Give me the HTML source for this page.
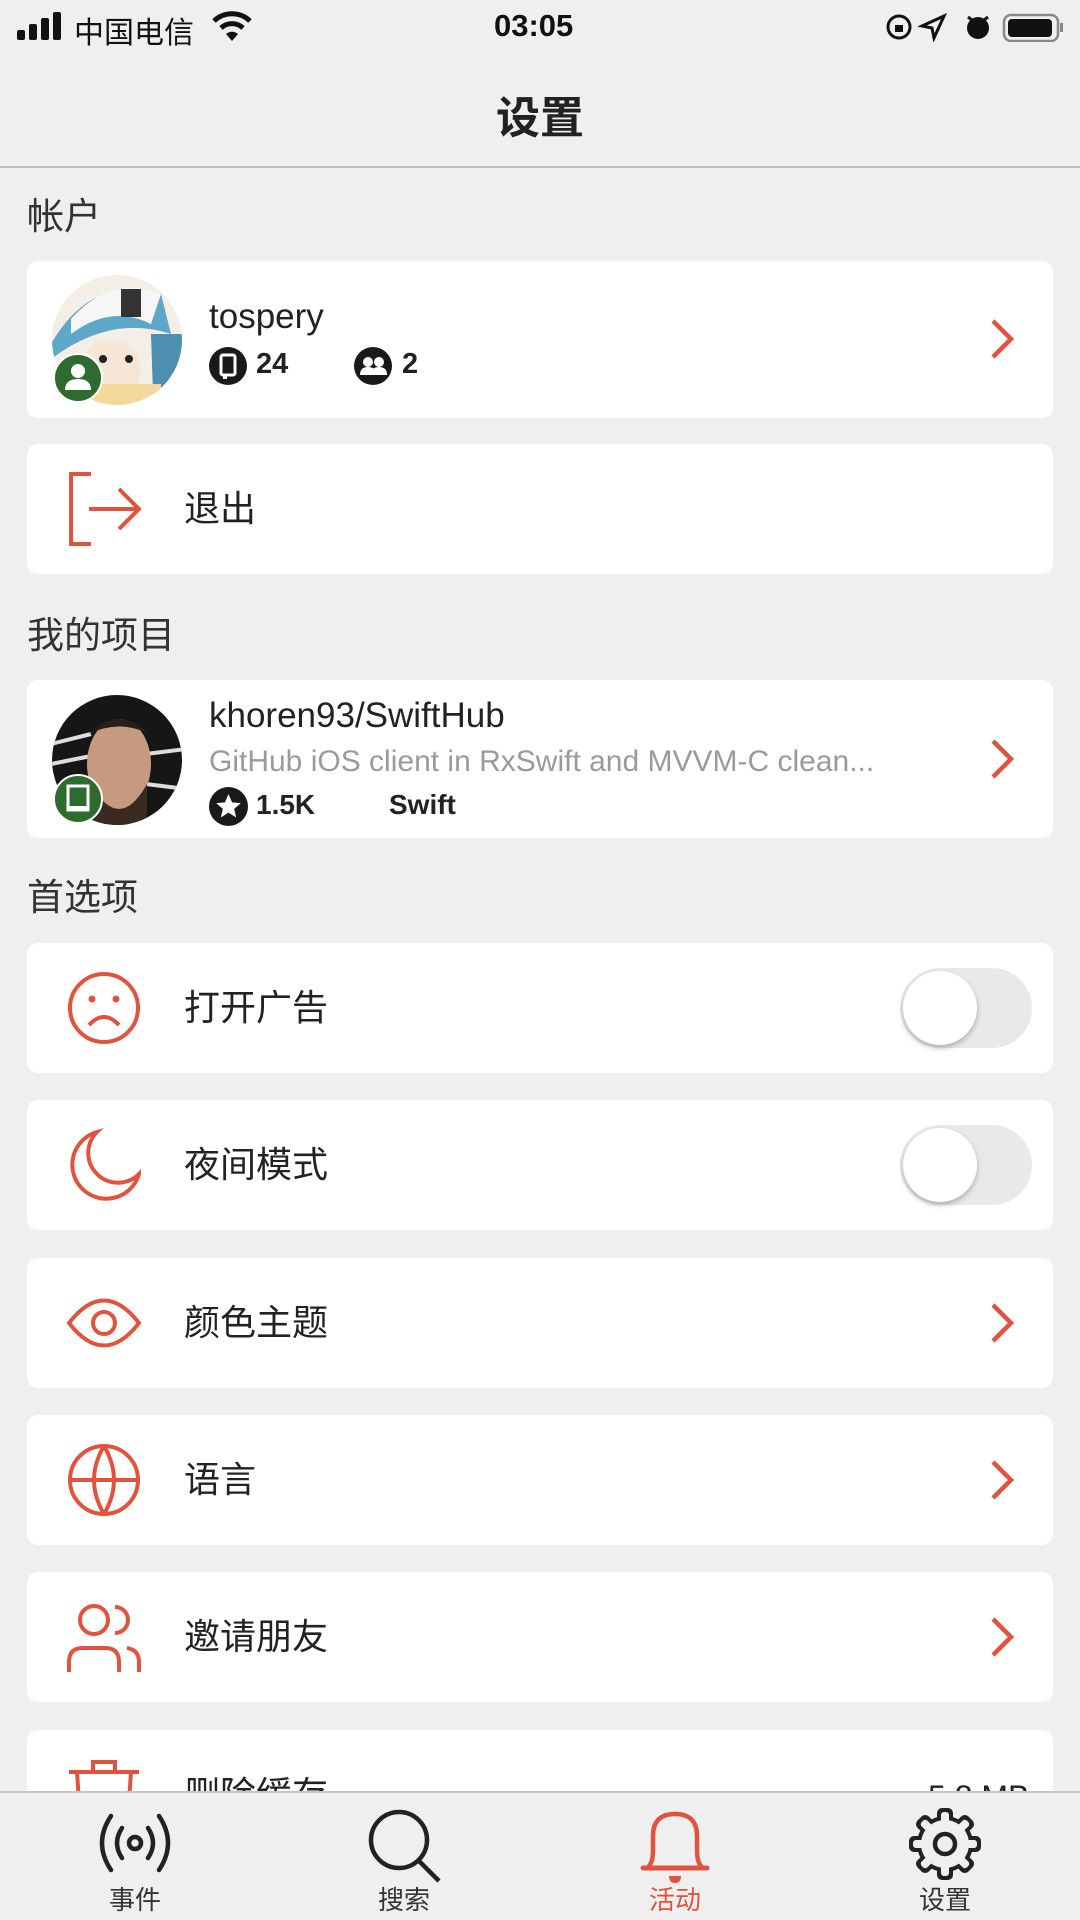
<!DOCTYPE html>
<html><head><meta charset="utf-8"><style>
*{margin:0;padding:0;box-sizing:border-box}
body{width:1080px;height:1920px;background:#efefef;position:relative;overflow:hidden;font-family:"Liberation Sans","Noto Sans CJK SC",sans-serif;color:#222}
.abs{position:absolute}
.card{position:absolute;left:27px;width:1026px;background:#fff;border-radius:11px}
.hdr{position:absolute;left:27px;font-size:37px;color:#333}
.lbl{position:absolute;left:157px;font-size:36px;color:#222;line-height:36px}
.ico{position:absolute;left:40px;width:74px;height:74px}
.chev{position:absolute;left:987px;width:30px;height:44px}
.tog{position:absolute;left:873px;width:132px;height:80px;border-radius:40px;background:#e9e9ea}
.tog:after{content:"";position:absolute;left:3px;top:3px;width:74px;height:74px;border-radius:50%;background:#fff;box-shadow:0 3px 6px rgba(0,0,0,.25)}
.tab{position:absolute;top:1880px;width:80px;text-align:center;font-size:26px;color:#333}
</style></head><body>
<div class="abs" style="left:17px;top:12px;">
<svg width="48" height="28"><rect x="0" y="18" width="8" height="10" rx="2" fill="#111"/><rect x="12" y="12" width="8" height="16" rx="2" fill="#111"/><rect x="24" y="6" width="8" height="22" rx="2" fill="#111"/><rect x="36" y="0" width="8" height="28" rx="2" fill="#111"/></svg></div>
<div class="abs" style="left:74px;top:8px;font-size:30px;color:#111">中国电信</div>
<svg class="abs" style="left:212px;top:10px" width="40" height="32" viewBox="0 0 40 32"><path d="M2 11a26 26 0 0 1 36 0" stroke="#111" stroke-width="5" fill="none"/><path d="M9 18a16 16 0 0 1 22 0" stroke="#111" stroke-width="5" fill="none"/><path d="M20 31l-6-7a9 9 0 0 1 12 0z" fill="#111"/></svg>
<div class="abs" style="left:494px;top:8px;font-size:31px;font-weight:bold;color:#111">03:05</div>
<svg class="abs" style="left:884px;top:12px" width="180" height="30" viewBox="0 0 180 30"><circle cx="15" cy="15" r="11" stroke="#111" stroke-width="3" fill="none"/><rect x="11" y="13" width="8" height="7" fill="#111"/><path d="M60 4L38 14l10 2 2 10z" fill="none" stroke="#111" stroke-width="3"/><circle cx="94" cy="16" r="11" fill="#111"/><path d="M84 5l4 3M104 5l-4 3" stroke="#111" stroke-width="3"/><rect x="120" y="3" width="54" height="26" rx="7" stroke="#888" stroke-width="2.5" fill="none"/><rect x="124" y="7" width="44" height="18" rx="4" fill="#111"/><rect x="176" y="11" width="3" height="9" fill="#888"/></svg>
<div class="abs" style="left:0;width:1080px;top:82px;text-align:center;font-size:44px;font-weight:bold;color:#222">设置</div>
<div class="abs" style="left:0;top:166px;width:1080px;height:2px;background:#bdbdbd"></div>

<div class="hdr" style="top:186px">帐户</div>
<div class="card" style="top:261px;height:157px"></div>
<svg class="abs" style="left:51px;top:274px" width="132" height="132" viewBox="0 0 132 132"><defs><clipPath id="c1"><circle cx="66" cy="66" r="65"/></clipPath></defs><g clip-path="url(#c1)"><rect width="132" height="132" fill="#f3efe6"/><path d="M0 70Q40 0 110 20L120 60Q60 40 0 85z" fill="#5fa7c9"/><path d="M20 45Q60 0 110 20L100 50Q60 30 20 60z" fill="#f6f6f6"/><rect x="70" y="15" width="20" height="28" fill="#333"/><path d="M100 60l32 0 0 60-30 0z" fill="#4d8fb0"/><circle cx="60" cy="95" r="30" fill="#f6e6d6"/><rect x="30" y="110" width="80" height="30" fill="#f2d89a"/><circle cx="52" cy="85" r="4" fill="#222"/><circle cx="78" cy="85" r="4" fill="#222"/></g></svg>
<svg class="abs" style="left:53px;top:353px" width="50" height="50" viewBox="0 0 50 50"><circle cx="25" cy="25" r="24" fill="#2e6b2e" stroke="#fff" stroke-width="2"/><circle cx="25" cy="18" r="7" fill="#fff"/><path d="M12 37q0-11 13-11t13 11z" fill="#fff"/></svg>
<div class="abs" style="left:209px;top:297px;font-size:35px;color:#222">tospery</div>
<svg class="abs" style="left:209px;top:347px" width="38" height="38" viewBox="0 0 38 38"><circle cx="19" cy="19" r="19" fill="#1a1a1a"/><rect x="12" y="8" width="14" height="20" rx="2" fill="none" stroke="#fff" stroke-width="3"/><rect x="14" y="28" width="4" height="4" fill="#fff"/></svg>
<div class="abs" style="left:256px;top:348px;font-size:29px;font-weight:bold">24</div>
<svg class="abs" style="left:354px;top:347px" width="38" height="38" viewBox="0 0 38 38"><circle cx="19" cy="19" r="19" fill="#1a1a1a"/><circle cx="14" cy="15" r="5" fill="#fff"/><circle cx="25" cy="15" r="5" fill="#fff"/><path d="M6 28q0-8 8-8t8 8zM17 28q0-8 8-8t8 8z" fill="#fff"/></svg>
<div class="abs" style="left:402px;top:348px;font-size:29px;font-weight:bold">2</div>
<svg class="chev" style="top:317px" viewBox="0 0 30 44"><path d="M6 4l18 18-18 18" stroke="#e0533f" stroke-width="4.5" fill="none"/></svg>

<div class="card" style="top:444px;height:130px"></div>
<svg class="ico" style="left:67px;top:472px" viewBox="0 0 74 74"><path d="M24 2H4v70h20" stroke="#e0533f" stroke-width="4" fill="none"/><path d="M22 37h50M52 17l20 20-20 20" stroke="#e0533f" stroke-width="4" fill="none"/></svg>
<div class="lbl" style="left:184px;top:491px">退出</div>

<div class="hdr" style="top:605px">我的项目</div>
<div class="card" style="top:680px;height:158px"></div>
<svg class="abs" style="left:51px;top:694px" width="132" height="132" viewBox="0 0 132 132"><defs><clipPath id="c2"><circle cx="66" cy="66" r="65"/></clipPath></defs><g clip-path="url(#c2)"><rect width="132" height="132" fill="#161616"/><path d="M0 50l40-10M0 70l40-8M95 60l40-5M95 90l40 5" stroke="#ddd" stroke-width="4"/><ellipse cx="68" cy="70" rx="32" ry="45" fill="#c79a80"/><path d="M40 90q28 50 56 0v42H40z" fill="#3a2a22"/><path d="M38 40q30-30 60 0q-30-15-60 0z" fill="#2a1e18"/></g></svg>
<svg class="abs" style="left:53px;top:774px" width="50" height="50" viewBox="0 0 50 50"><circle cx="25" cy="25" r="24" fill="#2e6b2e" stroke="#fff" stroke-width="2"/><rect x="15" y="12" width="20" height="24" fill="none" stroke="#fff" stroke-width="3"/><rect x="15" y="32" width="20" height="5" fill="#fff"/></svg>
<div class="abs" style="left:209px;top:696px;font-size:35px;color:#222">khoren93/SwiftHub</div>
<div class="abs" style="left:209px;top:745px;font-size:30px;color:#9a9a9a;white-space:nowrap">GitHub iOS client in RxSwift and MVVM-C clean...</div>
<svg class="abs" style="left:209px;top:787px" width="39" height="39" viewBox="0 0 38 38"><circle cx="19" cy="19" r="19" fill="#1a1a1a"/><path d="M19 7l3.5 8 8.5.7-6.5 5.6 2 8.4L19 25l-7.5 4.7 2-8.4L7 15.7l8.5-.7z" fill="#fff"/></svg>
<div class="abs" style="left:256px;top:789px;font-size:28px;font-weight:bold">1.5K</div>
<div class="abs" style="left:389px;top:789px;font-size:28px;font-weight:bold">Swift</div>
<svg class="chev" style="top:737px" viewBox="0 0 30 44"><path d="M6 4l18 18-18 18" stroke="#e0533f" stroke-width="4.5" fill="none"/></svg>

<div class="hdr" style="top:867px">首选项</div>

<div class="card" style="top:943px;height:130px"></div>
<svg class="ico" style="left:67px;top:971px" viewBox="0 0 74 74"><circle cx="37" cy="37" r="34" stroke="#e0533f" stroke-width="4" fill="none"/><circle cx="25" cy="28" r="3.5" fill="#e0533f"/><circle cx="49" cy="28" r="3.5" fill="#e0533f"/><path d="M22 54q15-16 30 0" stroke="#e0533f" stroke-width="4" fill="none"/></svg>
<div class="lbl" style="left:184px;top:990px">打开广告</div>
<div class="tog" style="left:900px;top:968px"></div>

<div class="card" style="top:1100px;height:130px"></div>
<svg class="ico" style="left:67px;top:1128px" viewBox="0 0 74 74"><path d="M30 4A34 34 0 1 0 72 46 26 26 0 0 1 30 4z" stroke="#e0533f" stroke-width="4" fill="none"/></svg>
<div class="lbl" style="left:184px;top:1147px">夜间模式</div>
<div class="tog" style="left:900px;top:1125px"></div>

<div class="card" style="top:1258px;height:130px"></div>
<svg class="ico" style="left:67px;top:1286px" viewBox="0 0 74 74"><path d="M2 37Q37-8 72 37Q37 82 2 37z" stroke="#e0533f" stroke-width="4" fill="none"/><circle cx="37" cy="37" r="11" stroke="#e0533f" stroke-width="4" fill="none"/></svg>
<div class="lbl" style="left:184px;top:1305px">颜色主题</div>
<svg class="chev" style="top:1301px" viewBox="0 0 30 44"><path d="M6 4l18 18-18 18" stroke="#e0533f" stroke-width="4.5" fill="none"/></svg>

<div class="card" style="top:1415px;height:130px"></div>
<svg class="ico" style="left:67px;top:1443px" viewBox="0 0 74 74"><circle cx="37" cy="37" r="34" stroke="#e0533f" stroke-width="4" fill="none"/><path d="M3 37h68M37 3q-20 34 0 68M37 3q20 34 0 68" stroke="#e0533f" stroke-width="4" fill="none"/></svg>
<div class="lbl" style="left:184px;top:1462px">语言</div>
<svg class="chev" style="top:1458px" viewBox="0 0 30 44"><path d="M6 4l18 18-18 18" stroke="#e0533f" stroke-width="4.5" fill="none"/></svg>

<div class="card" style="top:1572px;height:130px"></div>
<svg class="ico" style="left:67px;top:1600px" viewBox="0 0 74 74"><circle cx="27" cy="20" r="14" stroke="#e0533f" stroke-width="4" fill="none"/><path d="M2 72V62q0-14 14-14h22q14 0 14 14v10" stroke="#e0533f" stroke-width="4" fill="none"/><path d="M48 7a13 13 0 0 1 0 26M60 48q12 2 12 14v10" stroke="#e0533f" stroke-width="4" fill="none"/></svg>
<div class="lbl" style="left:184px;top:1619px">邀请朋友</div>
<svg class="chev" style="top:1615px" viewBox="0 0 30 44"><path d="M6 4l18 18-18 18" stroke="#e0533f" stroke-width="4.5" fill="none"/></svg>

<div class="card" style="top:1730px;height:130px"></div>
<svg class="ico" style="left:67px;top:1758px" viewBox="0 0 74 74"><path d="M26 12V4h22v8M2 14h70M10 14l4 58h46l4-58" stroke="#e0533f" stroke-width="4" fill="none"/></svg>
<div class="lbl" style="left:184px;top:1777px">删除缓存</div>
<div class="abs" style="left:928px;top:1779px;font-size:32px;color:#222">5.8 MB</div>

<div class="abs" style="left:0;top:1791px;width:1080px;height:129px;background:#efefef;border-top:2px solid #c4c4c4"></div>
<svg class="abs" style="left:98px;top:1810px" width="74" height="66" viewBox="0 0 74 66"><circle cx="37" cy="33" r="6" stroke="#222" stroke-width="4.5" fill="none"/><path d="M24 18q-10 15 0 30M50 18q10 15 0 30M13 6q-18 27 0 54M61 6q18 27 0 54" stroke="#222" stroke-width="4.5" fill="none" stroke-linecap="round"/></svg>
<div class="tab" style="left:95px">事件</div>
<svg class="abs" style="left:367px;top:1808px" width="76" height="76" viewBox="0 0 76 76"><circle cx="32" cy="32" r="28" stroke="#222" stroke-width="4.5" fill="none"/><path d="M52 53l20 20" stroke="#222" stroke-width="4.5"/></svg>
<div class="tab" style="left:364px">搜索</div>
<svg class="abs" style="left:637px;top:1808px" width="76" height="76" viewBox="0 0 76 76"><path d="M10 60q6-4 6-18V28q0-22 22-22t22 22v14q0 14 6 18z" stroke="#e0533f" stroke-width="4.5" fill="none" stroke-linejoin="round"/><path d="M6 60h64" stroke="#e0533f" stroke-width="5" stroke-linecap="round"/><path d="M32 68h12q0 7-6 7t-6-7z" fill="#e0533f"/></svg>
<div class="tab" style="left:635px;color:#e0533f">活动</div>
<svg class="abs" style="left:907px;top:1806px" width="76" height="76" viewBox="0 0 76 76"><g transform="translate(38 38)"><g fill="#222"><circle r="28"/><rect x="-8" y="-36" width="16" height="72" rx="5"/><rect x="-8" y="-36" width="16" height="72" rx="5" transform="rotate(45)"/><rect x="-8" y="-36" width="16" height="72" rx="5" transform="rotate(90)"/><rect x="-8" y="-36" width="16" height="72" rx="5" transform="rotate(135)"/></g><g fill="#efefef"><circle r="24"/><rect x="-4" y="-32" width="8" height="64" rx="3"/><rect x="-4" y="-32" width="8" height="64" rx="3" transform="rotate(45)"/><rect x="-4" y="-32" width="8" height="64" rx="3" transform="rotate(90)"/><rect x="-4" y="-32" width="8" height="64" rx="3" transform="rotate(135)"/></g><circle r="10" stroke="#222" stroke-width="4.5" fill="none"/></g></svg>
<div class="tab" style="left:905px">设置</div>
</body></html>
